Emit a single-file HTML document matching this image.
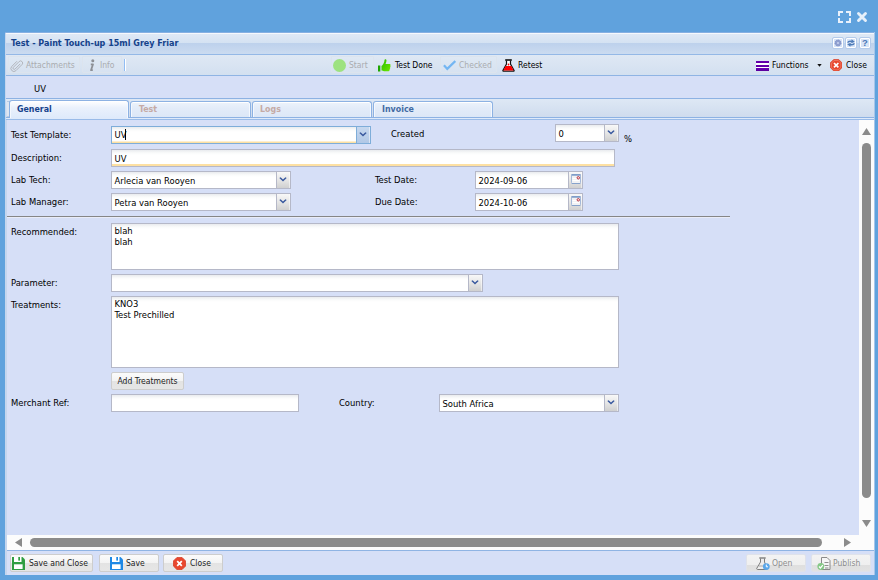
<!DOCTYPE html>
<html><head><meta charset="utf-8"><title>Test - Paint Touch-up 15ml Grey Friar</title>
<style>
*{box-sizing:border-box;margin:0;padding:0}
html,body{width:878px;height:580px;overflow:hidden;background:#60a2dd}
body{font-family:"DejaVu Sans Condensed","Liberation Sans",sans-serif;font-size:9.35px;color:#000;position:relative}
.abs{position:absolute}
.t{position:absolute;white-space:nowrap;line-height:12px;height:12px}
.s{font-size:8.5px}
#win{position:absolute;left:5px;top:32px;width:870px;height:543px;background:#c5d6ee;border-top:1px solid #86b0e2}
#body{position:absolute;left:7px;top:120px;width:852px;height:415px;background:#d6dff7}
#hdr{position:absolute;left:6px;top:33px;width:868px;height:22px;border-bottom:1px solid #94b8e6;background:linear-gradient(#f6f9fd 0,#f6f9fd 1px,#dfe9f6 1px,#d4e2f2 10px,#bdd1ec 10px,#cbdbf0 21px)}
#hdr .t{left:5px;top:4px;font-weight:bold;color:#15428b;font-size:8.95px}
.tool{position:absolute;top:4px;width:12px;height:12px;border:1px solid #b4cbeb;background:#d7e4f7;border-radius:2px;box-shadow:inset 0 0 0 1px #fff}
#tb{position:absolute;left:6px;top:55px;width:868px;height:21px;border-bottom:1px solid #8fb4e4;background:linear-gradient(#dfe8f4,#d3e0f0)}
.dbox{position:absolute;top:1px;height:17px;border:1px solid #dce4ee;border-radius:1px;background:rgba(255,255,255,.05)}
#uv{position:absolute;left:6px;top:76px;width:868px;height:22px;background:#d6dff7}
#tabs{position:absolute;left:6px;top:98px;width:868px;height:22px;background:linear-gradient(#dee8f5,#cfdcee 18px);border-top:1px solid #8db2e3;border-bottom:1px solid #99bbe8}
.tab{position:absolute;top:2px;height:16px;border:1px solid #8db2e3;border-bottom:none;border-radius:3px 3px 0 0;box-shadow:inset 0 1px 0 #fff,inset 1px 0 0 #f4f8fe,inset -1px 0 0 #f4f8fe;background:linear-gradient(#edf3fc,#e3ecf9 40%,#dce7f7);font-weight:bold;font-size:8.800px;line-height:15px;color:#416aa3;white-space:nowrap}
.tab.act{background:linear-gradient(#fff,#eaf1fc 40%,#deeafb);color:#15428b;height:18px;top:1px;line-height:17px}
.tab.dis{color:#c5aaa5}
#tabline{position:absolute;left:0;top:18px;width:868px;height:2px;background:#deeafb;border-top:1px solid #8db2e3}
.lbl{position:absolute;left:11px;white-space:nowrap;line-height:12px;font-size:9.400px}
.inp{position:absolute;height:18px;border:1px solid #b5b8c8;background:linear-gradient(#e9ebee 0,#fafbfb 3px,#fff 5px);padding:3px 3px 0 2.500px;line-height:12px;white-space:pre;overflow:hidden}
.inp.foc{border-color:#7eadd9}
.inp.or{box-shadow:inset 0 -2px 0 #fde0a2}
.trg{position:absolute;width:14px;height:18px;border:1px solid #b5b8c8;border-left:none;background:linear-gradient(#f8f8f8,#e6e6e6 50%,#d0d0d0);box-shadow:inset -1px 0 0 rgba(255,255,255,.5)}
.trg svg{position:absolute;left:2px;top:5px}
.btn{position:absolute;height:18px;border:1px solid #cdcdcd;border-radius:2px;background:linear-gradient(#fbfbfb 0,#f3f3f3 50%,#e3e3e3 52%,#e6e6e6);line-height:17px;white-space:nowrap;color:#222;font-size:8.500px}
.btn.d{border-color:#dfe2ea;color:#8d8d8d;background:linear-gradient(#f3f3f3 0,#efefef 60%,#dfdfdf 62%,#e2e2e2)}
.btn svg{position:absolute}
.gray{color:#aaacb0}
</style></head><body>
<!-- top right icons -->
<svg class="abs" style="left:838px;top:11px" width="13" height="12" viewBox="0 0 13 12" fill="none" stroke="#e9f1fb" stroke-width="2"><path d="M1 5V1H5M8 1h4V5M12 7v4H8M5 11H1V7"/></svg>
<svg class="abs" style="left:856px;top:11px" width="12" height="12" viewBox="0 0 12 12" stroke="#e6f0fa" stroke-width="2.900" stroke-linecap="round"><path d="M2.500 2.500l7 7M9.500 2.500l-7 7"/></svg>

<div id="win"></div>
<div id="body"></div>
<div id="hdr"><div class="t">Test - Paint Touch-up 15ml Grey Friar</div>
 <div class="tool" style="left:826px"><svg width="10" height="10" viewBox="0 0 10 10" style="position:absolute;left:0;top:0"><circle cx="5" cy="5" r="3" fill="#8f9fd0" stroke="#7b8cc4" stroke-width="1" stroke-dasharray="1.2 0.8"/><circle cx="5" cy="5" r="1" fill="#c9d3ef"/></svg></div>
 <div class="tool" style="left:839px"><svg width="10" height="10" viewBox="0 0 10 10" style="position:absolute;left:0;top:0" fill="none" stroke="#4f7cb8" stroke-width="1.3"><path d="M1.600 4.600C2.400 3.200 4 3 6 3.500M8.400 5.400C7.600 6.800 6 7 4 6.500"/><path d="M5.600 1.200L8.800 3.700 5.300 5.200z M4.400 8.800L1.200 6.300 4.700 4.800z" fill="#4f7cb8" stroke="none"/></svg></div>
 <div class="tool" style="left:853px"><div style="position:absolute;left:2px;top:-1px;font:bold 9.500px 'Liberation Sans',sans-serif;color:#4a78b6;line-height:12px">?</div></div>
</div>
<div id="tb">
 <div class="dbox" style="left:2px;width:72px"></div>
 <svg class="abs" style="left:2.600px;top:2.600px" width="15.400" height="15.400" viewBox="0 0 14 14" fill="none" stroke="#b2b5bb" stroke-width=".85"><g transform="rotate(45 7 7) translate(3.5 0)"><path d="M4.600 3.500V10.200a1.100 1.100 0 0 1-2.200 0V2.800a1.900 1.900 0 0 1 3.800 0V10.600a2.700 2.700 0 0 1-5.400 0V4"/></g></svg>
 <div class="t s gray" style="left:20px;top:4px">Attachments</div>
 <div class="dbox" style="left:76px;width:40px"></div>
 <svg class="abs" style="left:82px;top:4px" width="7" height="13" viewBox="0 0 7 13"><circle cx="4.800" cy="1.700" r="1.500" fill="#8d9096"/><path d="M2.800 5.300h2.200L3 11.200h1.800" fill="none" stroke="#8d9096" stroke-width="1.800" stroke-linejoin="round"/></svg>
 <div class="t s gray" style="left:94px;top:4px">Info</div>
 <div class="abs" style="left:118px;top:4px;width:2px;height:12px;background:#92bdf3;border-right:1px solid #fff"></div>
 <div class="dbox" style="left:325px;width:43px"></div>
 <div class="abs" style="left:327px;top:4px;width:13px;height:13px;border-radius:7px;background:#9de27f"></div>
 <div class="t s gray" style="left:343px;top:4px">Start</div>
 <svg class="abs" style="left:372px;top:4px" width="13" height="13" viewBox="0 0 13 13"><defs><linearGradient id="gg" x1="0" y1="0" x2="1" y2="1"><stop offset="0" stop-color="#2bbd00"/><stop offset="1" stop-color="#6ee800"/></linearGradient></defs><rect x="0" y="6.500" width="2.300" height="6" fill="#1ea600"/><path d="M3.500 7C5 6 6.500 3 6.500 1c0-1.200 2-1.200 2 .3 0 1.500-.5 2.700-1 3.700h4c1 0 1.200 1 .8 1.600.4.500.3 1.300-.2 1.700.3.600.1 1.300-.4 1.600.2.700-.2 2.300-1.200 2.300H6c-1 0-1.500-.6-2.500-.6z" fill="url(#gg)"/></svg>
 <div class="t s" style="left:389px;top:4px">Test Done</div>
 <div class="dbox" style="left:434px;width:57px"></div>
 <svg class="abs" style="left:437px;top:5px" width="13.300" height="10.600" viewBox="0 0 14 11" fill="none" stroke="#74b6f2" stroke-width="2.400"><path d="M1 5.500l3.500 3.800L13 1"/></svg>
 <div class="t s gray" style="left:453px;top:4px">Checked</div>
 <svg class="abs" style="left:496px;top:4px" width="13" height="13" viewBox="0 0 13 13"><path d="M4.500 1.500v3.500L1 11.200c-.3.600 0 1 .6 1h9.800c.6 0 .9-.4.600-1L8.500 5V1.500" fill="#fff" stroke="#111" stroke-width="1.200"/><path d="M3.600 7h5.800l2.200 4.600H1.400z" fill="#f00"/><path d="M3.200 1h6.600" stroke="#111" stroke-width="1.600"/><circle cx="6.500" cy="5.500" r=".9" fill="#e00"/></svg>
 <div class="t s" style="left:512px;top:4px">Retest</div>
 <div class="abs" style="left:750px;top:6px;width:13px;height:10px;background:linear-gradient(#6a00b4 0,#5a009c 2.300px,#fff 2.300px,#fff 3.700px,#6a00b4 3.700px,#5a009c 6px,#fff 6px,#fff 7.500px,#6a00b4 7.500px,#5a009c 9.800px,transparent 9.800px)"></div>
 <div class="t s" style="left:766px;top:4px">Functions</div>
 <svg class="abs" style="left:811px;top:9px" width="5" height="3"><path d="M.3 0h4.400L2.500 2.800z" fill="#111"/></svg>
 <svg class="abs" style="left:824px;top:4px" width="12.400" height="12.400" viewBox="0 0 13 13"><path d="M4 .4h5L12.600 4v5L9 12.600H4L.4 9V4z" fill="#e8472e" stroke="#d93c26" stroke-width=".8"/><path d="M4.300 1.600h4.400L11.400 4.300v4.400L8.700 11.400H4.300L1.600 8.700V4.300z" fill="none" stroke="#f08a76" stroke-width=".7"/><path d="M4.200 4.200l4.600 4.600M8.800 4.200l-4.600 4.600" stroke="#fff" stroke-width="1.800"/></svg>
 <div class="t s" style="left:840px;top:4px">Close</div>
</div>
<div id="uv"><div class="t" style="left:28px;top:7px">UV</div></div>
<div id="tabs">
 <div id="tabline"></div>
 <div class="abs" style="left:1px;top:2px;width:3px;height:16px;background:#dfe6f1;border:1px solid #b9cbe3;border-left:none"></div>
 <div class="tab act" style="left:3px;width:120px;padding-left:7px">General</div>
 <div class="tab dis" style="left:124px;width:121px;padding-left:8px">Test</div>
 <div class="tab dis" style="left:246px;width:120px;padding-left:7px">Logs</div>
 <div class="tab" style="left:367px;width:120px;padding-left:8px">Invoice</div>
</div>

<!-- form -->
<div class="lbl" style="top:129px">Test Template:</div>
<div class="inp foc or" style="left:111px;top:126px;width:246px;padding-top:2px;box-shadow:inset 0 -1.500px 0 #fde0a2">UV<span style="display:inline-block;width:1px;height:11px;background:#000;vertical-align:-2px;margin-left:-1px"></span></div>
<div class="trg" style="left:357px;top:126px;border-color:#7eadd9;background:linear-gradient(#c6d8ef,#b1c8e6)"><svg width="8" height="5" viewBox="0 0 8 5"><path d="M.3 1L1.600 .2 4 2.600 6.400 .2 7.700 1 4 4.400z" fill="#38589e"/></svg></div>
<div class="t" style="left:391px;top:128px">Created</div>
<div class="inp" style="left:555px;top:124px;width:50px">0</div>
<div class="trg" style="left:605px;top:124px"><svg width="8" height="5" viewBox="0 0 8 5"><path d="M.3 1L1.600 .2 4 2.600 6.400 .2 7.700 1 4 4.400z" fill="#38589e"/></svg></div>
<div class="t" style="left:624px;top:133px">%</div>

<div class="lbl" style="top:152px">Description:</div>
<div class="inp or" style="left:111px;top:149px;width:504px">UV</div>

<div class="lbl" style="top:174px">Lab Tech:</div>
<div class="inp" style="left:111px;top:171px;width:166px">Arlecia van Rooyen</div>
<div class="trg" style="left:277px;top:171px"><svg width="8" height="5" viewBox="0 0 8 5"><path d="M.3 1L1.600 .2 4 2.600 6.400 .2 7.700 1 4 4.400z" fill="#38589e"/></svg></div>
<div class="t" style="left:375px;top:174px">Test Date:</div>
<div class="inp" style="left:475px;top:171px;width:94px">2024-09-06</div>
<div class="trg cal" style="left:569px;top:171px"><svg style="left:1.500px;top:2px" width="10" height="10" viewBox="0 0 10 10"><rect x=".5" y=".5" width="9" height="9" rx="1" fill="#f1f2f4" stroke="#a4b9d9"/><rect x=".3" y="0" width="9.400" height="1.800" rx=".8" fill="#7f9dc8"/><rect x=".6" y="9" width="8.800" height="1" rx=".5" fill="#86a2cb"/><path d="M1.500 4.500h7M1.500 6.500h7" stroke="#fff" stroke-width="1"/><circle cx="7.300" cy="3.800" r="1.200" fill="#fff" stroke="#b52a3a" stroke-width="1"/></svg></div>

<div class="lbl" style="top:196px">Lab Manager:</div>
<div class="inp" style="left:111px;top:193px;width:166px">Petra van Rooyen</div>
<div class="trg" style="left:277px;top:193px"><svg width="8" height="5" viewBox="0 0 8 5"><path d="M.3 1L1.600 .2 4 2.600 6.400 .2 7.700 1 4 4.400z" fill="#38589e"/></svg></div>
<div class="t" style="left:375px;top:196px">Due Date:</div>
<div class="inp" style="left:475px;top:193px;width:94px">2024-10-06</div>
<div class="trg cal" style="left:569px;top:193px"><svg style="left:1.500px;top:2px" width="10" height="10" viewBox="0 0 10 10"><rect x=".5" y=".5" width="9" height="9" rx="1" fill="#f1f2f4" stroke="#a4b9d9"/><rect x=".3" y="0" width="9.400" height="1.800" rx=".8" fill="#7f9dc8"/><rect x=".6" y="9" width="8.800" height="1" rx=".5" fill="#86a2cb"/><path d="M1.500 4.500h7M1.500 6.500h7" stroke="#fff" stroke-width="1"/><circle cx="7.300" cy="3.800" r="1.200" fill="#fff" stroke="#b52a3a" stroke-width="1"/></svg></div>

<div class="abs" style="left:7px;top:216px;width:723px;height:2px;border-top:1px solid #868686;border-bottom:1px solid #e9ecf8"></div>

<div class="lbl" style="top:226px">Recommended:</div>
<div class="inp" style="left:111px;top:223px;width:508px;height:47px;line-height:11px;padding-top:1px">blah
blah</div>

<div class="lbl" style="top:277px">Parameter:</div>
<div class="inp" style="left:111px;top:274px;width:358px"></div>
<div class="trg" style="left:469px;top:274px"><svg width="8" height="5" viewBox="0 0 8 5"><path d="M.3 1L1.600 .2 4 2.600 6.400 .2 7.700 1 4 4.400z" fill="#38589e"/></svg></div>

<div class="lbl" style="top:299px">Treatments:</div>
<div class="inp" style="left:111px;top:296px;width:508px;height:72px;line-height:11px;padding-top:1px">KNO3
Test Prechilled</div>

<div class="btn" style="left:111px;top:372px;width:73px;padding-left:5.500px">Add Treatments</div>

<div class="lbl" style="top:397px">Merchant Ref:</div>
<div class="inp" style="left:111px;top:394px;width:188px"></div>
<div class="t" style="left:339px;top:397px">Country:</div>
<div class="inp" style="left:439px;top:394px;width:166px">South Africa</div>
<div class="trg" style="left:605px;top:394px"><svg width="8" height="5" viewBox="0 0 8 5"><path d="M.3 1L1.600 .2 4 2.600 6.400 .2 7.700 1 4 4.400z" fill="#38589e"/></svg></div>

<!-- scrollbars -->
<div class="abs" style="left:859px;top:120px;width:15px;height:430px;background:#fcfcfc"></div>
<div class="abs" style="left:7px;top:535px;width:867px;height:15px;background:#fcfcfc"></div>
<div class="abs" style="left:862px;top:143px;width:9px;height:355px;border-radius:5px;background:#8b8b8b"></div>
<div class="abs" style="left:30px;top:538px;width:792px;height:9px;border-radius:5px;background:#8b8b8b"></div>
<svg class="abs" style="left:862px;top:128px" width="9" height="7"><path d="M0 7L4.500 0 9 7z" fill="#8b8b8b"/></svg>
<svg class="abs" style="left:862px;top:520px" width="9" height="7"><path d="M0 0h9L4.500 7z" fill="#8b8b8b"/></svg>
<svg class="abs" style="left:15px;top:538px" width="7" height="9"><path d="M7 0v9L0 4.500z" fill="#8b8b8b"/></svg>
<svg class="abs" style="left:844px;top:538px" width="7" height="9"><path d="M0 0v9L7 4.500z" fill="#8b8b8b"/></svg>

<div class="abs" style="left:874px;top:32px;width:1px;height:543px;background:#a6c6ea"></div>
<!-- footer -->
<div class="abs" id="ft" style="left:7px;top:550px;width:867px;height:25px;background:#d6dff7;border-top:1px solid #8fb4e4"></div>
<div class="btn" style="left:10px;top:554px;width:83px;padding-left:18px"><svg style="left:1px;top:2px" width="13" height="13" viewBox="0 0 13 13"><path d="M0 0h10.500L13 2.500V13H0z" fill="#2f9e41"/><rect x="2" y="0" width="7.500" height="5" fill="#fff"/><rect x="6.300" y="0" width="1.700" height="3.600" fill="#2f9e41"/><rect x="2" y="7.300" width="8.600" height="4.700" fill="#fff"/></svg>Save and Close</div>
<div class="btn" style="left:99px;top:554px;width:60px;padding-left:26px"><svg style="left:10px;top:2px" width="13" height="13" viewBox="0 0 13 13"><path d="M0 0h10.500L13 2.500V13H0z" fill="#1e88e5"/><rect x="2" y="0" width="7.500" height="5" fill="#fff"/><rect x="6.300" y="0" width="1.700" height="3.600" fill="#1e88e5"/><rect x="2" y="7.300" width="8.600" height="4.700" fill="#fff"/></svg>Save</div>
<div class="btn" style="left:163px;top:554px;width:60px;padding-left:26px"><svg style="left:9px;top:2px" width="13" height="13" viewBox="0 0 13 13"><path d="M4 .4h5L12.600 4v5L9 12.600H4L.4 9V4z" fill="#e8472e" stroke="#d63a24" stroke-width=".8"/><path d="M4.200 4.200l4.600 4.600M8.800 4.200l-4.600 4.600" stroke="#fff" stroke-width="1.800"/></svg>Close</div>
<div class="btn d" style="left:746px;top:554px;width:60px;padding-left:25px"><svg style="left:9px;top:2px" width="14" height="13" viewBox="0 0 14 13"><path d="M4.500 1.500v3.500L.8 11.300c-.3.600 0 1.200.7 1.200h9c.7 0 1-.6.700-1.200L8.500 5V1.500" fill="#ededed" stroke="#7d7d7d" stroke-width="1"/><path d="M3.300 1h6.400" stroke="#7d7d7d" stroke-width="1.400"/><path d="M3 9h7" stroke="#aaa" stroke-width="1"/><circle cx="10.300" cy="9.600" r="3.400" fill="#5aa7ea"/><path d="M10.300 7.600v2.200h1.700" stroke="#fff" stroke-width="1" fill="none"/></svg>Open</div>
<div class="btn d" style="left:811px;top:554px;width:60px;padding-left:21px"><svg style="left:5px;top:2px" width="14" height="13" viewBox="0 0 14 13"><path d="M4.500 .5h5.500l3 3v9h-8.500z" fill="#f6f6f6" stroke="#8a8a8a" stroke-width="1"/><path d="M7.500 5.500h4M7.500 8.500h4M8 11h3.500" stroke="#8f8f8f" stroke-width="1"/><circle cx="3.800" cy="9.500" r="3.400" fill="#86c987"/><path d="M2 9.500l1.400 1.500 2.400-2.800" stroke="#fff" stroke-width="1.200" fill="none"/></svg>Publish</div>
</body></html>
